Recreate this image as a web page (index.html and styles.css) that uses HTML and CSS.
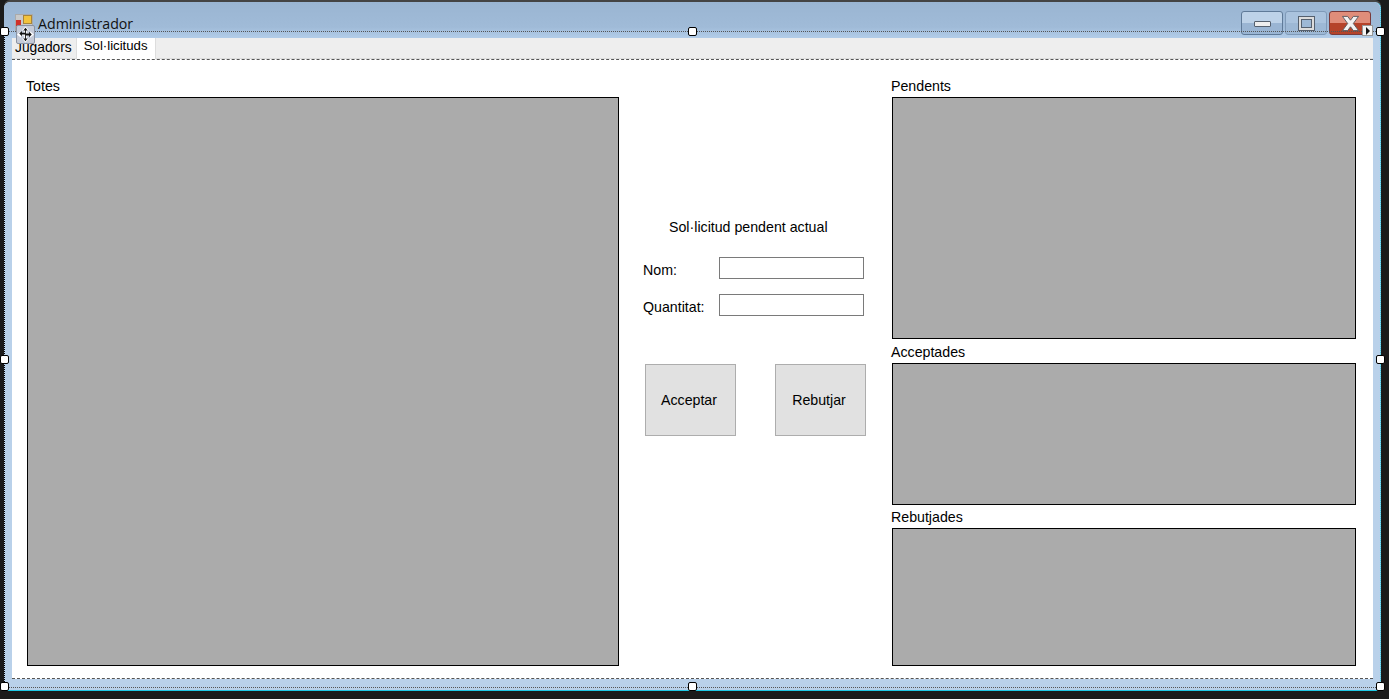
FILE: index.html
```html
<!DOCTYPE html>
<html lang="en">
<head>
    <meta charset="UTF-8">
    <meta name="viewport" content="width=device-width, initial-scale=1.0">
    <title>Administrador</title>
    <link rel="stylesheet" href="styles.css">
</head>
<body>
    <div class="window">
        <div class="titlebar">
            <svg class="app-icon" width="18" height="17" viewBox="0 0 18 17">
                <rect x="0.5" y="0.5" width="17" height="16" fill="#c9c9c9" stroke="#aaa"/>
                <rect x="8.5" y="1.5" width="8" height="8" fill="#f3c33c" stroke="#a8853a"/>
                <rect x="1" y="6" width="5" height="6" fill="#d0312a"/>
            </svg>
            <span class="title">Administrador</span>
            <div class="caption-buttons">
                <div class="caption-btn">
                    <span class="min-glyph"></span>
                </div>
                <div class="caption-btn max-btn">
                    <span class="max-glyph"></span>
                </div>
                <div class="caption-btn close-btn">
                    <svg width="19" height="17" viewBox="0 0 20 18">
                        <path d="M1.500 1.500h5.500L10 5.500l3-4h5.500L13 9l5.500 7.500H13l-3-4-3 4H1.500L7 9z" fill="#f2f2f2" stroke="#5a5a60"/>
                    </svg>
                </div>
            </div>
        </div>

        <div class="client">
            <div class="tabstrip">
                <div class="tab">Jugadors</div>
                <div class="tab active">Sol·licituds</div>
            </div>

            <div class="tabpage">
                <div class="col-left">
                    <label class="caption">Totes</label>
                    <div class="grid-view grow"></div>
                </div>

                <div class="col-center">
                    <div class="center-title">Sol·licitud pendent actual</div>
                    <div class="field">
                        <label>Nom:</label>
                        <input type="text" class="textbox">
                    </div>
                    <div class="field">
                        <label>Quantitat:</label>
                        <input type="text" class="textbox">
                    </div>
                    <div class="actions">
                        <button class="flat-btn">Acceptar</button>
                        <button class="flat-btn">Rebutjar</button>
                    </div>
                </div>

                <div class="col-right">
                    <label class="caption">Pendents</label>
                    <div class="grid-view pendents"></div>
                    <label class="caption">Acceptades</label>
                    <div class="grid-view acceptades"></div>
                    <label class="caption">Rebutjades</label>
                    <div class="grid-view grow"></div>
                </div>
            </div>
        </div>

        <div class="bottom-edge"></div>

        <!-- marc de seleccio del dissenyador -->
        <div class="selection"></div>
        <span class="handle h-tl"></span>
        <span class="handle h-tc"></span>
        <span class="handle h-tr"></span>
        <span class="handle h-ml"></span>
        <span class="handle h-mr"></span>
        <span class="handle h-bl"></span>
        <span class="handle h-bc"></span>
        <span class="handle h-br"></span>

        <div class="move-glyph">
            <svg width="19" height="19" viewBox="0 0 19 19">
                <path d="M9.500 0.500l4 4.500h-2.500v3.500h3.500V6l4.500 3.500-4.500 3.500v-2.500H11V14h2.500l-4 4.500-4-4.500H8v-3.500H4.500V13L0 9.500 4.500 6v2.500H8V5H5.500z" fill="#fff"/>
                <path d="M9.500 2l2.500 3h-2v3.500h3.500v-2l3 3-3 3v-2H10V14h2l-2.500 3L7 14h2v-4.500H5.500v2l-3-3 3-3v2H9V5H7z" fill="#111"/>
            </svg>
        </div>
        <div class="smart-tag"><span></span></div>
    </div>
</body>
</html>
```

FILE: styles.css
```css
html, body {
    margin: 0;
    padding: 0;
    height: 699px;
    overflow: hidden;
    background-color: #1b1b1b;
    font-family: "Liberation Sans", Arial, sans-serif;
    font-size: 14.2px;
    color: #000;
}

.window {
    position: relative;
    box-sizing: border-box;
    width: 1377px;
    height: 689px;
    margin: 2px 0 0 4px;
    display: flex;
    flex-direction: column;
    background-color: #b9d1ea;
    border-radius: 6px 6px 0 0;
    border-bottom: 1px solid #1fc8e4;
    border-right: 1px dotted #1fc8e4;
    box-shadow: 0 -2px 0 #444;
}

.titlebar {
    height: 36px;
    flex: none;
    display: flex;
    align-items: flex-start;
    background: linear-gradient(#9ab5d2, #a0bbd8 70%, #b3cde9);
    border-radius: 6px 6px 0 0;
}

.app-icon {
    margin: 12px 0 0 11px;
}

.title {
    margin: 13px 0 0 5px;
    font-family: "Open Sans", sans-serif;
    font-size: 14.2px;
    line-height: 18px;
    color: #111;
}

.caption-buttons {
    margin: 9px 9px 0 auto;
    display: flex;
    gap: 2px;
}

.caption-btn {
    box-sizing: border-box;
    width: 42px;
    height: 24px;
    border: 1px solid #5f7a98;
    border-radius: 3px;
    background: linear-gradient(#bdd2e8 50%, #9ab5d3 50%);
    display: flex;
    align-items: center;
    justify-content: center;
}

.max-btn {
    border-color: #7f9ab8;
    background: linear-gradient(#aac3de 50%, #9db8d5 50%);
}

.close-btn {
    border-color: #7a3a3a;
    background: linear-gradient(#e08d7a 50%, #b5432a 50%);
}

.min-glyph {
    box-sizing: border-box;
    width: 17px;
    height: 6px;
    background-color: #eee;
    border: 1px solid #55606e;
    border-radius: 1px;
    margin-top: 2px;
}

.max-glyph {
    box-sizing: border-box;
    width: 15px;
    height: 13px;
    background-color: #9db8d5;
    border: 2px solid #dcdcdc;
    outline: 1px solid #55606e;
    box-shadow: inset 0 0 0 1px #55606e;
}

.client {
    flex: 1;
    margin: 0 7px 0 8px;
    display: flex;
    flex-direction: column;
    background-color: #fff;
}

.tabstrip {
    height: 21px;
    flex: none;
    display: flex;
    background-color: #eee;
    border-bottom: 1px solid #ddd;
    box-sizing: border-box;
}

.tab {
    padding: 1px 4px 0 3px;
    line-height: 17px;
    font-size: 13.8px;
    border-right: 1px solid #ddd;
}

.tab.active {
    padding: 0 7px 0 7px;
    height: 21px;
    box-sizing: border-box;
    background-color: #fff;
    font-size: 13.2px;
    line-height: 15px;
}

.tabpage {
    flex: 1;
    display: flex;
    padding: 20px 17px 12px 15px;
    border-top: 1px dashed #555;
    border-bottom: 1px dashed #555;
}

.col-left {
    width: 592px;
    display: flex;
    flex-direction: column;
}

.col-right {
    width: 464px;
    display: flex;
    flex-direction: column;
}

.col-center {
    width: 273px;
    box-sizing: border-box;
    padding: 139px 0 0 24px;
}

.caption {
    display: block;
    height: 17px;
    line-height: 12px;
    margin-left: -1px;
}

.grid-view {
    box-sizing: border-box;
    background-color: #ababab;
    border: 1px solid #000;
}

.grow {
    flex: 1;
}

.pendents {
    height: 242px;
    margin-bottom: 7px;
}

.acceptades {
    height: 142px;
    margin-bottom: 6px;
}

.center-title {
    margin-left: 26px;
    height: 17px;
    line-height: 17px;
    margin-bottom: 21px;
}

.field {
    display: flex;
    align-items: center;
    height: 22px;
    margin-bottom: 15px;
}

.field label {
    width: 76px;
    flex: none;
    padding-top: 4px;
}

.textbox {
    box-sizing: border-box;
    width: 145px;
    height: 22px;
    margin: 0;
    padding: 0 3px;
    border: 1px solid #7a7a7a;
    background-color: #fff;
}

.actions {
    margin: 48px 0 0 2px;
    width: 221px;
    display: flex;
    justify-content: space-between;
}

.flat-btn {
    box-sizing: border-box;
    width: 91px;
    height: 72px;
    padding: 0 3px 0 0;
    border: 1px solid #adadad;
    background-color: #e1e1e1;
    font-family: inherit;
    font-size: 14.2px;
    color: #000;
}

.bottom-edge {
    height: 11px;
    flex: none;
}

.selection {
    position: absolute;
    left: 0;
    right: 0;
    top: 29px;
    height: 655px;
    border-top: 1px dotted #555;
    border-bottom: 1px dotted #555;
    border-left: 1px dotted #000;
}

.handle {
    position: absolute;
    box-sizing: border-box;
    width: 9px;
    height: 9px;
    background-color: #fff;
    border: 1px solid #000;
    border-radius: 2px;
}

.h-tl { left: -4px; top: 25px; }
.h-tc { left: 684px; top: 25px; }
.h-tr { left: 1372px; top: 25px; }
.h-ml { left: -4px; top: 353px; }
.h-mr { left: 1372px; top: 353px; }
.h-bl { left: -4px; top: 680px; }
.h-bc { left: 684px; top: 680px; }
.h-br { left: 1372px; top: 680px; }

.move-glyph {
    position: absolute;
    left: 12px;
    top: 23px;
    box-sizing: border-box;
    width: 19px;
    height: 19px;
    background-color: #c5cbd8;
    border: 1px solid #8a93a3;
    border-radius: 2px;
    display: flex;
    align-items: center;
    justify-content: center;
}

.smart-tag {
    position: absolute;
    left: 1358px;
    top: 23px;
    box-sizing: border-box;
    width: 11px;
    height: 11px;
    background-color: #f4f4f4;
    border: 1px solid #999;
    display: flex;
    align-items: center;
    justify-content: center;
}

.smart-tag span {
    width: 0;
    height: 0;
    border-left: 4px solid #111;
    border-top: 4px solid transparent;
    border-bottom: 4px solid transparent;
}
```
